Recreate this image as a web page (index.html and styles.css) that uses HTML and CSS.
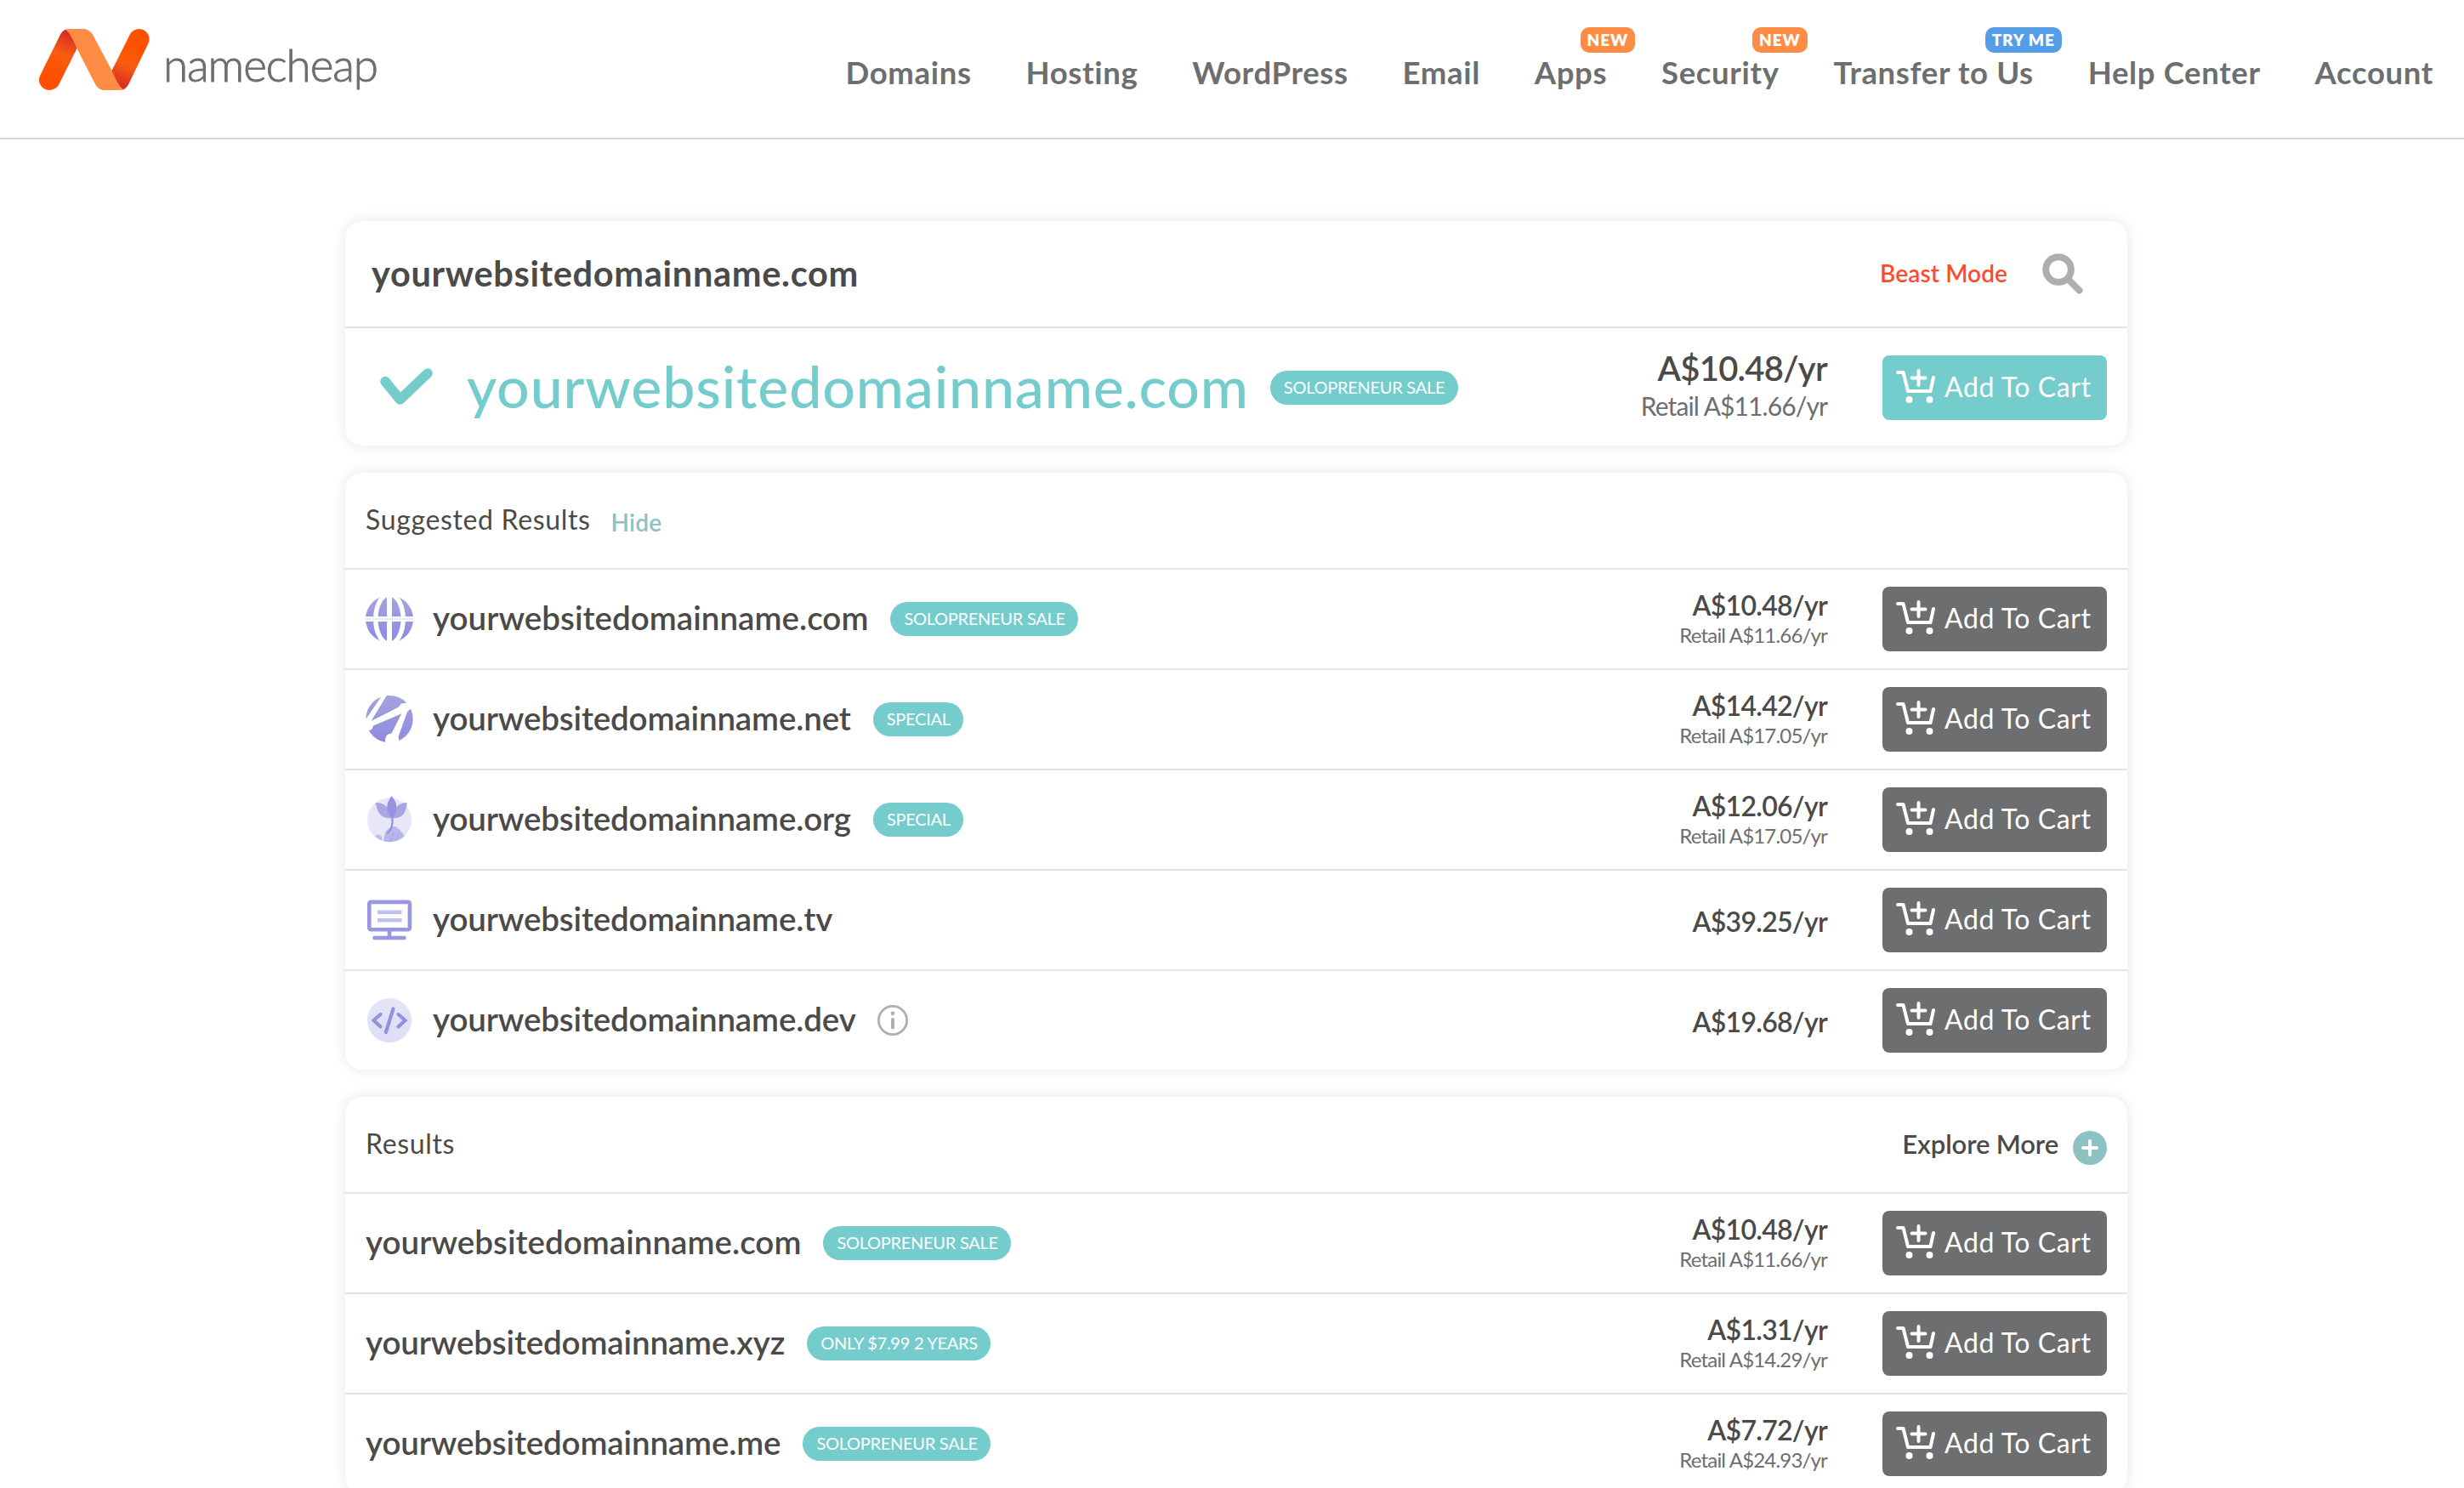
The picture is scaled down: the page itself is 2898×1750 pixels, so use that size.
FILE: index.html
```html
<!DOCTYPE html>
<html lang="en">
<head>
<meta charset="utf-8">
<title>Domain search results | Namecheap</title>
<link rel="stylesheet" href="styles.css">
</head>
<body>
<svg class="sprite" width="0" height="0" aria-hidden="true">
  <defs>
    <linearGradient id="lilac" x1="0" y1="0" x2="0" y2="1"><stop offset="0" stop-color="#a5a2e0"/><stop offset="1" stop-color="#8d8ae0"/></linearGradient>
    <linearGradient id="pale" x1="0" y1="0" x2="0" y2="1"><stop offset="0" stop-color="#e6e5f6"/><stop offset="1" stop-color="#dfdcf6"/></linearGradient>
  </defs>
  <symbol id="cart" viewBox="0 0 46 40">
    <g fill="none" stroke="#fff" stroke-width="4" stroke-linecap="round" stroke-linejoin="round">
      <path d="M2 4h6.500L14 26h26.500L44 10"/>
      <path d="M26.500 2v17M18.500 10.500h16"/>
    </g>
    <circle cx="15.500" cy="36" r="4" fill="#fff"/><circle cx="39.500" cy="36" r="4" fill="#fff"/>
  </symbol>
</svg>

<header class="header">
  <a class="brand">
    <svg class="brand-mark" viewBox="46 34 130 72">
      <defs>
        <linearGradient id="leg1" gradientUnits="userSpaceOnUse" x1="80" y1="36" x2="62" y2="84"><stop offset="0.050" stop-color="#d92b26"/><stop offset="0.550" stop-color="#f75d12"/><stop offset="1" stop-color="#ff5100"/></linearGradient>
        <linearGradient id="leg2" gradientUnits="userSpaceOnUse" x1="142" y1="104" x2="160" y2="56"><stop offset="0.050" stop-color="#d92b26"/><stop offset="0.550" stop-color="#f75d12"/><stop offset="1" stop-color="#ff5100"/></linearGradient>
      </defs>
      <path fill="url(#leg1)" d="M47.300 88.500L70.500 41.500Q73.500 35.500 78 34.500L86 40L90.500 57L69.200 99.500Q65.500 106 58 106A12 12 0 0 1 47.300 88.500Z"/>
      <path fill="url(#leg2)" d="M174.200 51.500L151.500 98.500Q148.500 104.500 144 105.500L136 100L131.500 83L152.800 40.500Q156.500 34 163.500 34A12 12 0 0 1 174.200 51.500Z"/>
      <path fill="#ff8c44" d="M77 35Q79 34 82 34H98Q105 34 109.500 41.500L131.500 83Q140 102.500 145 105Q143 106 140 106H122Q116 106 112 99L90.500 57Q82 37.500 77 35Z"/>
    </svg>
    <span class="brand-name">namecheap</span>
  </a>
  <nav class="nav">
    <a class="nav-item">Domains</a>
    <a class="nav-item">Hosting</a>
    <a class="nav-item">WordPress</a>
    <a class="nav-item">Email</a>
    <a class="nav-item">Apps<span class="tag tag-orange">NEW</span></a>
    <a class="nav-item">Security<span class="tag tag-orange">NEW</span></a>
    <a class="nav-item">Transfer to Us<span class="tag tag-blue">TRY ME</span></a>
    <a class="nav-item">Help Center</a>
    <a class="nav-item">Account</a>
  </nav>
</header>

<main class="main">
  <section class="card">
    <div class="search">
      <span class="search-text">yourwebsitedomainname.com</span>
      <a class="beast">Beast Mode</a>
      <svg class="search-icon" viewBox="0 0 48 48"><g fill="none" stroke="#aeaeae" stroke-width="8"><circle cx="19" cy="19" r="14.800"/><path d="M30 30L43.500 43.500" stroke-linecap="round"/></g></svg>
    </div>
    <div class="featured">
      <svg class="check" viewBox="0 0 62 46"><path d="M6 15.500L23.500 37L56 6" fill="none" stroke="#74cccc" stroke-width="11.500" stroke-linecap="round" stroke-linejoin="round"/></svg>
      <span class="featured-name">yourwebsitedomainname.com</span>
      <span class="pill">SOLOPRENEUR SALE</span>
      <div class="prices prices-large"><b class="price">A$10.48/yr</b><span class="retail">Retail A$11.66/yr</span></div>
      <button class="btn btn-teal"><svg class="cart"><use href="#cart"/></svg><span class="btn-label">Add To Cart</span></button>
    </div>
  </section>

  <section class="card">
    <div class="card-head"><h2 class="card-title">Suggested Results</h2><a class="hide">Hide</a></div>
    <div class="row">
      <svg class="tld" viewBox="0 0 56 56">
        <clipPath id="globeClip"><circle cx="28" cy="28" r="28"/></clipPath>
        <g clip-path="url(#globeClip)">
          <rect y="2" width="56" height="52" fill="url(#lilac)"/>
          <g fill="none" stroke="#fff"><ellipse cx="28" cy="28" rx="16.200" ry="29" stroke-width="5.500"/><path d="M28 0V56M0 28H56" stroke-width="6"/></g>
          <path d="M0 28H56" stroke="#ebebf8" stroke-width="2"/>
        </g>
      </svg>
      <span class="name">yourwebsitedomainname.com</span><span class="pill">SOLOPRENEUR SALE</span>
      <div class="prices"><b class="price">A$10.48/yr</b><span class="retail">Retail A$11.66/yr</span></div>
      <button class="btn"><svg class="cart"><use href="#cart"/></svg><span class="btn-label">Add To Cart</span></button>
    </div>
    <div class="row">
      <svg class="tld" viewBox="0 0 56 56">
        <circle cx="28" cy="27.700" r="27.700" fill="url(#lilac)"/>
        <g transform="scale(.33333) translate(-30 -384)" fill="#fff">
          <path d="M92 378L108 378L50 473Q100 450 148 424Q152 409 168 411L205 405L188 432Q176 438 172 455L146 528L150 565H97L99 548Q98 520 118 518L122 517L157 448L56 491Q56 503 42 508L20 512L22 465L33 464Z"/>
        </g>
      </svg>
      <span class="name name-tight">yourwebsitedomainname.net</span><span class="pill">SPECIAL</span>
      <div class="prices"><b class="price">A$14.42/yr</b><span class="retail">Retail A$17.05/yr</span></div>
      <button class="btn"><svg class="cart"><use href="#cart"/></svg><span class="btn-label">Add To Cart</span></button>
    </div>
    <div class="row">
      <svg class="tld" viewBox="0 0 56 56">
        <g transform="scale(.33333) translate(-30 -738)">
          <clipPath id="orgClip"><circle cx="114" cy="823" r="78"/></clipPath>
          <circle cx="114" cy="823" r="78" fill="#e8e7f7"/>
          <g clip-path="url(#orgClip)">
            <path d="M62 884Q66 872 78 875Q90 880 88 890L82 905H60Z" fill="#c3c0f0"/>
            <path d="M92 905L98 870Q110 845 132 846Q142 846 142 854Q152 852 154 864Q164 868 164 878L176 885V905Z" fill="#b9b6ee"/>
            <path d="M118 902L130 866M138 900L146 872" stroke="#aaa7ea" stroke-width="4"/>
          </g>
          <path d="M66 762Q110 760 123 816Q72 822 66 762ZM176 762Q134 760 123 816Q172 822 176 762Z" fill="#a9a6e2"/>
          <path d="M122 738Q156 780 123 816Q89 780 122 738Z" fill="#9793e0"/>
          <path d="M124 812Q128 852 108 870" fill="none" stroke="#9793e0" stroke-width="7" stroke-linecap="round"/>
        </g>
      </svg>
      <span class="name name-tight">yourwebsitedomainname.org</span><span class="pill">SPECIAL</span>
      <div class="prices"><b class="price">A$12.06/yr</b><span class="retail">Retail A$17.05/yr</span></div>
      <button class="btn"><svg class="cart"><use href="#cart"/></svg><span class="btn-label">Add To Cart</span></button>
    </div>
    <div class="row">
      <svg class="tld" viewBox="0 0 56 56">
        <rect x="4.300" y="6.900" width="47.600" height="32.400" rx="2" fill="none" stroke="#9a97e0" stroke-width="4.600"/>
        <path d="M14 18.700H42.500M14 28.200H42.500" stroke="#c2c0ee" stroke-width="4.600"/>
        <path d="M28 41V47" stroke="#9a97e0" stroke-width="4.600"/><path d="M10.500 49H45.500" stroke="#9a97e0" stroke-width="4.600" stroke-linecap="round"/>
      </svg>
      <span class="name name-tight">yourwebsitedomainname.tv</span>
      <div class="prices prices-single"><b class="price">A$39.25/yr</b></div>
      <button class="btn"><svg class="cart"><use href="#cart"/></svg><span class="btn-label">Add To Cart</span></button>
    </div>
    <div class="row">
      <svg class="tld" viewBox="0 0 56 56">
        <circle cx="28" cy="28" r="26" fill="url(#pale)"/>
        <path d="M17.500 21L9.500 28L17.500 35.500M38.500 21L46.500 28L38.500 35.500M32.500 14.500L23.800 42" fill="none" stroke="#9390e0" stroke-width="4.200" stroke-linecap="round"/>
      </svg>
      <span class="name name-tight">yourwebsitedomainname.dev</span>
      <svg class="info" viewBox="0 0 36 36"><circle cx="18" cy="18" r="16.600" fill="none" stroke="#b0adad" stroke-width="2.800"/><circle cx="18" cy="9.800" r="2.400" fill="#b0adad"/><path d="M18 17V26.500" stroke="#b0adad" stroke-width="4" stroke-linecap="round"/></svg>
      <div class="prices prices-single"><b class="price">A$19.68/yr</b></div>
      <button class="btn"><svg class="cart"><use href="#cart"/></svg><span class="btn-label">Add To Cart</span></button>
    </div>
  </section>

  <section class="card">
    <div class="card-head">
      <h2 class="card-title">Results</h2>
      <a class="explore">Explore More<svg class="plus" viewBox="0 0 40 40"><circle cx="20" cy="20" r="20" fill="#8dc1c2"/><path d="M20 12V28M12 20H28" stroke="#fff" stroke-width="4" stroke-linecap="round"/></svg></a>
    </div>
    <div class="row">
      <span class="name">yourwebsitedomainname.com</span><span class="pill">SOLOPRENEUR SALE</span>
      <div class="prices"><b class="price">A$10.48/yr</b><span class="retail">Retail A$11.66/yr</span></div>
      <button class="btn"><svg class="cart"><use href="#cart"/></svg><span class="btn-label">Add To Cart</span></button>
    </div>
    <div class="row">
      <span class="name name-tight">yourwebsitedomainname.xyz</span><span class="pill">ONLY $7.99 2 YEARS</span>
      <div class="prices"><b class="price">A$1.31/yr</b><span class="retail">Retail A$14.29/yr</span></div>
      <button class="btn"><svg class="cart"><use href="#cart"/></svg><span class="btn-label">Add To Cart</span></button>
    </div>
    <div class="row">
      <span class="name name-tight">yourwebsitedomainname.me</span><span class="pill">SOLOPRENEUR SALE</span>
      <div class="prices"><b class="price">A$7.72/yr</b><span class="retail">Retail A$24.93/yr</span></div>
      <button class="btn"><svg class="cart"><use href="#cart"/></svg><span class="btn-label">Add To Cart</span></button>
    </div>
  </section>
</main>
</body>
</html>
```
FILE: styles.css
```css
* { box-sizing: border-box; }

body {
  margin: 0;
  height: 1750px;
  overflow: hidden;
  background: #fff;
  color: #4b4a48;
  font-family: Lato, "Open Sans", sans-serif;
  line-height: 1.2;
}

.sprite { display: block; width: 0; height: 0; }
svg { flex: none; }

/* Header */
.header {
  display: flex;
  justify-content: space-between;
  align-items: flex-start;
  height: 164px;
  padding: 0 36px 0 46px;
  border-bottom: 2px solid #d6d6d6;
}
.brand { display: flex; padding-top: 34px; }
.brand-mark { width: 130px; height: 72px; }
.brand-name {
  margin-left: 16px;
  padding-top: 10px;
  color: #6d6e70;
  font-size: 53px;
  font-weight: 300;
  letter-spacing: -1.1px;
  -webkit-text-stroke: 0.9px #6d6e70;
}
.nav { display: flex; gap: 63.900px; padding-top: 63px; }
.nav-item {
  position: relative;
  color: #6d6e70;
  font-size: 36.500px;
  font-weight: 700;
  line-height: 44px;
  letter-spacing: 0.65px;
  white-space: nowrap;
}
.tag {
  position: absolute;
  top: -31px;
  right: -33px;
  height: 30px;
  padding: 0 8px 0 8px;
  border-radius: 10px;
  color: #fff;
  font-size: 19px;
  font-weight: 800;
  line-height: 30px;
  letter-spacing: 0.9px;
}
.tag-orange { background: #ff8c44; }
.tag-blue { background: #569de7; }

/* Cards */
.main {
  display: flex;
  flex-direction: column;
  gap: 32px;
  width: 2096px;
  margin: 96px 0 0 406px;
}
.card {
  border-radius: 20px;
  background: #fff;
  box-shadow: 0 0 16px rgba(0, 0, 0, 0.1);
}
.search {
  display: flex;
  align-items: center;
  height: 124px;
  padding: 0 52px 0 31px;
}
.search-text {
  padding-bottom: 1px;
  font-size: 41.500px;
  font-weight: 700;
  letter-spacing: 0.7px;
}
.beast {
  margin-left: auto;
  color: #ff4b2b;
  font-size: 28px;
  font-weight: 600;
  letter-spacing: 0.1px;
}
.search-icon { width: 48px; height: 48px; margin-left: 41px; }
.featured {
  display: flex;
  align-items: center;
  height: 140px;
  padding: 0 24px 0 41px;
  border-top: 2px solid #e3e3e3;
}
.check { width: 62px; height: 46px; margin-top: 1px; }
.featured-name {
  margin: 0 25px 0 40px;
  padding-bottom: 3px;
  color: #74cccc;
  font-size: 68px;
  font-weight: 500;
  letter-spacing: 0.85px;
}
.pill {
  height: 40px;
  padding: 0 15.600px 0 16px;
  border-radius: 20px;
  background: #74cccc;
  color: #fff;
  font-size: 20px;
  line-height: 38px;
  letter-spacing: -0.27px;
  white-space: nowrap;
}
.featured .pill { margin-top: 2px; }
.prices {
  display: flex;
  flex-direction: column;
  align-items: flex-end;
  margin-left: auto;
}
.price {
  font-size: 32px;
  font-weight: 600;
  line-height: 38px;
  letter-spacing: -0.7px;
}
.retail {
  color: #6d6e70;
  font-size: 24px;
  line-height: 32px;
  letter-spacing: -0.82px;
}
.prices-single { padding-top: 3px; }
.prices-large { padding-bottom: 2px; }
.prices-large .price { font-size: 40px; line-height: 46px; letter-spacing: -0.75px; }
.prices-large .retail { font-size: 30px; line-height: 42px; letter-spacing: -0.9px; }

.btn {
  display: flex;
  align-items: center;
  width: 264px;
  height: 76px;
  margin: 0 0 0 65px;
  padding: 0 0 0 16px;
  border: 0;
  border-radius: 8px;
  background: #6d6e70;
  color: #fff;
  font: 400 32px/1.2 Lato, "Open Sans", sans-serif;
  letter-spacing: 0.59px;
}
.btn-teal { margin-top: 2px; background: #74cccc; }
.cart { width: 46px; height: 40px; margin-bottom: 4px; }
.btn-label { margin-left: 11px; padding-bottom: 2px; white-space: nowrap; }

.card-head {
  display: flex;
  align-items: center;
  height: 112px;
  padding: 0 24px;
}
.card-title {
  margin: 0;
  padding-bottom: 2px;
  font-size: 32px;
  font-weight: 400;
  letter-spacing: 0.65px;
}
.hide {
  margin-left: 24px;
  padding-top: 5px;
  color: #8cc2c2;
  font-size: 28px;
  font-weight: 600;
  letter-spacing: 0.2px;
}
.explore {
  display: flex;
  align-items: center;
  margin-left: auto;
  font-size: 31px;
  font-weight: 600;
  letter-spacing: -0.12px;
}
.plus { width: 40px; height: 40px; margin: 8px 0 0 17px; }

.row {
  display: flex;
  align-items: center;
  height: 118px;
  padding: 0 24px;
  border-top: 2px solid #e3e3e3;
}
.tld { width: 56px; height: 56px; margin-right: 23px; }
.name {
  margin-right: 26px;
  padding-bottom: 3px;
  font-size: 38.500px;
  font-weight: 600;
  letter-spacing: 0.05px;
}
.name-tight { letter-spacing: -0.13px; }
.info { width: 36px; height: 36px; margin-left: -1px; }
```
